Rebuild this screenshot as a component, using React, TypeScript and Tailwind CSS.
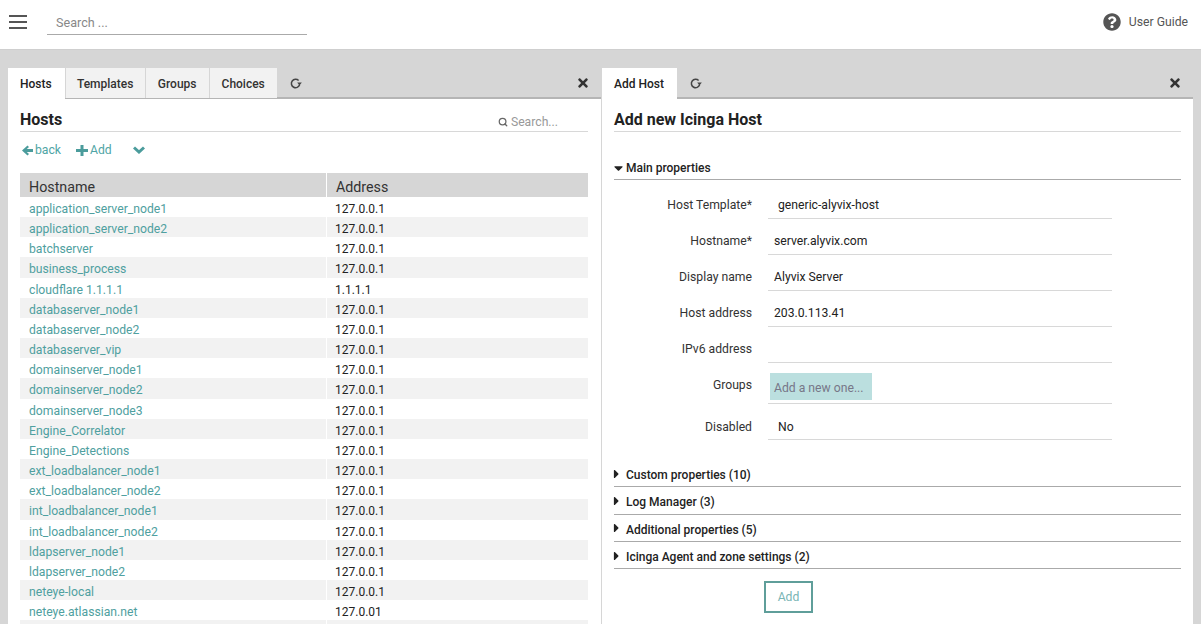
import { Search } from "lucide-react";
import { FaQuestionCircle, FaTimes, FaCaretDown, FaCaretRight } from "react-icons/fa";

const hosts: [string, string][] = [
  ["application_server_node1", "127.0.0.1"],
  ["application_server_node2", "127.0.0.1"],
  ["batchserver", "127.0.0.1"],
  ["business_process", "127.0.0.1"],
  ["cloudflare 1.1.1.1", "1.1.1.1"],
  ["databaserver_node1", "127.0.0.1"],
  ["databaserver_node2", "127.0.0.1"],
  ["databaserver_vip", "127.0.0.1"],
  ["domainserver_node1", "127.0.0.1"],
  ["domainserver_node2", "127.0.0.1"],
  ["domainserver_node3", "127.0.0.1"],
  ["Engine_Correlator", "127.0.0.1"],
  ["Engine_Detections", "127.0.0.1"],
  ["ext_loadbalancer_node1", "127.0.0.1"],
  ["ext_loadbalancer_node2", "127.0.0.1"],
  ["int_loadbalancer_node1", "127.0.0.1"],
  ["int_loadbalancer_node2", "127.0.0.1"],
  ["ldapserver_node1", "127.0.0.1"],
  ["ldapserver_node2", "127.0.0.1"],
  ["neteye-local", "127.0.0.1"],
  ["neteye.atlassian.net", "127.0.01"],
  ["", ""],
];

const fields = [
  { label: "Host Template*", value: "generic-alyvix-host", pad: "pl-[10px]" },
  { label: "Hostname*", value: "server.alyvix.com", pad: "pl-[6px]" },
  { label: "Display name", value: "Alyvix Server", pad: "pl-[6px]" },
  { label: "Host address", value: "203.0.113.41", pad: "pl-[6px]" },
  { label: "IPv6 address", value: "", pad: "pl-[6px]" },
];

const sections = ["Custom properties (10)", "Log Manager (3)", "Additional properties (5)", "Icinga Agent and zone settings (2)"];

function Tab({ label, active, width }: { label: string; active?: boolean; width?: string }) {
  return (
    <div
      className={
        active
          ? "h-[31px] pt-[1px] pl-[12px] pr-[13px] flex items-center bg-white text-[12px] font-medium text-[#222]"
          : `h-[30px] pt-[2px] ${width} justify-center flex items-center bg-[#f2f2f2] border-l border-[#d6d6d6] text-[12px] font-medium text-[#333]`
      }
    >
      {label}
    </div>
  );
}

function FieldRow({ label, children, h = "h-[36px]", pt = "pt-[13px]" }: { label: string; children: React.ReactNode; h?: string; pt?: string }) {
  return (
    <div className={`flex ${h}`}>
      <div className={`w-[138px] ${pt} text-right text-[12.2px] leading-[18px] text-[#333]`}>{label}</div>
      <div className="ml-[16px] w-[344px] border-b border-[#d8d8d8]">{children}</div>
    </div>
  );
}

function ReloadIcon() {
  return (
    <svg className="relative mt-[10px] ml-[13px]" width="12" height="11" viewBox="0 0 12 11" fill="none">
      <path d="M9.6 6.8A4.2 4.2 0 1 1 8.6 2.6" stroke="#444" strokeWidth="1.5" />
      <polygon points="7.2,4.6 11.8,4.6 9.5,7.4" fill="#444" />
    </svg>
  );
}

export default function App() {
  return (
    <div className="h-[624px] w-[1201px] overflow-hidden bg-[#d6d6d6] font-['Roboto',sans-serif]">
      <header className="h-[50px] bg-white flex items-start border-b border-[#cfcfcf]">
        <svg className="ml-[9px] mt-[15px]" width="18" height="14" viewBox="0 0 18 14" fill="#555">
          <rect x="0" y="0" width="18" height="2" />
          <rect x="0" y="6" width="18" height="2" />
          <rect x="0" y="12" width="18" height="2" />
        </svg>
        <div className="ml-[20px] w-[260px] h-[26px] mt-[9px] border-b border-[#aaa] pl-[9px] text-[12.6px] leading-[28px] text-[#888]">Search ...</div>
        <div className="ml-auto mr-[13px] mt-[13px] flex items-center gap-[8px] text-[12.2px] text-[#555]">
          <FaQuestionCircle className="w-[18px] h-[18px] text-[#555]" />
          <span>User Guide</span>
        </div>
      </header>

      <div className="flex pt-[18px] pl-[8px]">
        {/* Hosts pane */}
        <section className="w-[593px] h-[556px] overflow-hidden">
          <div className="flex items-start h-[31px] relative">
            <div className="absolute left-0 right-0 top-[29px] h-[2px] bg-[#b5b5b5]" />
            <div className="relative flex items-start">
              <Tab label="Hosts" active />
              <Tab label="Templates" width="w-[80px]" />
              <Tab label="Groups" width="w-[64px]" />
              <Tab label="Choices" width="w-[68px]" />
            </div>
            <ReloadIcon />
            <FaTimes className="relative ml-auto mr-[11px] mt-[8px] w-[14px] h-[14px] text-[#333]" />
          </div>
          <div className="h-[525px] bg-white pl-[12px] pr-[13px] overflow-hidden">
            <div className="h-[33px] flex items-end border-b border-[#d8d8d8]">
              <h1 className="text-[16px] leading-[22px] font-bold text-[#222]">Hosts</h1>
              <div className="ml-auto mr-[30px] flex items-center gap-[3px] text-[12.2px] text-[#999]">
                <Search className="w-[10px] h-[10px] text-[#666]" strokeWidth={3} />
                <span>Search...</span>
              </div>
            </div>
            <div className="h-[41px] pt-[9px] flex items-start text-[12.2px] leading-[18px] text-[#4fa5a5]">
              <svg className="ml-[2px] mt-[4px]" width="11" height="11" viewBox="0 0 11 11" fill="#4b9c9c">
                <path d="M5.5 0.5 7 2 4.8 4H11V7H4.8L7 9 5.5 10.5 0 5.5Z" />
              </svg>
              <span className="ml-[2px]">back</span>
              <svg className="ml-[15px] mt-[4px]" width="12" height="11" viewBox="0 0 12 11" fill="#4b9c9c">
                <rect x="4.5" y="0" width="3" height="11" />
                <rect x="0" y="4" width="12" height="3" />
              </svg>
              <span className="ml-[2px]">Add</span>
              <svg className="ml-[21px] mt-[5px]" width="12" height="8" viewBox="0 0 12 8" fill="none" stroke="#4b9c9c" strokeWidth="3">
                <path d="M1 1.5 6 6 11 1.5" />
              </svg>
            </div>
            <div className="flex h-[24px] bg-[#d6d6d6] text-[14.25px] leading-[28px] text-[#333]">
              <div className="w-[307px] pl-[9px] border-r border-white">Hostname</div>
              <div className="pl-[9px]">Address</div>
            </div>
            {hosts.map(([name, addr], i) => (
              <div key={i} className="flex h-[20.17px] text-[12.2px] leading-[25px]">
                <div className={`w-[306px] pl-[9px] mr-[1px] text-[#4fa0a0] ${i % 2 ? "bg-[#f2f2f2]" : "bg-white"}`}>{name}</div>
                <div className={`flex-1 pl-[8px] text-[12px] leading-[25px] text-[#222] ${i % 2 ? "bg-[#f2f2f2]" : "bg-white"}`}>{addr}</div>
              </div>
            ))}
          </div>
        </section>

        {/* Add host pane */}
        <section className="ml-[1px] w-[591px] h-[556px] overflow-hidden">
          <div className="flex items-start h-[31px] relative">
            <div className="absolute left-0 right-0 top-[29px] h-[2px] bg-[#b5b5b5]" />
            <div className="relative"><Tab label="Add Host" active /></div>
            <ReloadIcon />
            <FaTimes className="relative ml-auto mr-[11px] mt-[8px] w-[14px] h-[14px] text-[#333]" />
          </div>
          <div className="h-[525px] bg-white pl-[12px] pr-[12px]">
            <div className="h-[33px] flex items-end border-b border-[#d8d8d8]">
              <h1 className="text-[16px] leading-[22px] font-bold text-[#222]">Add new Icinga Host</h1>
            </div>
            <div className="mt-[24px] h-[24px] pt-[1px] flex items-center border-b border-[#aaa] text-[12px] font-medium text-[#222]">
              <FaCaretDown className="w-[9px] h-[14px] mr-[3px]" />
              Main properties
            </div>
            <div className="mt-[3px]">
              {fields.map((f) => (
                <FieldRow key={f.label} label={f.label}>
                  <div className={`${f.pad} pt-[13px] text-[12.2px] leading-[18px] text-[#222]`}>{f.value}</div>
                </FieldRow>
              ))}
              <FieldRow label="Groups" h="h-[41px]">
                <div className="pl-[2px] pt-[10px]">
                  <div className="w-[102px] h-[27px] pl-[4px] bg-[#bbdfdf] text-[12.2px] leading-[30px] text-[#778]">Add a new one...</div>
                </div>
              </FieldRow>
              <FieldRow label="Disabled" pt="pt-[14px]">
                <div className="pl-[10px] pt-[14px] text-[12.2px] leading-[18px] text-[#222]">No</div>
              </FieldRow>
            </div>
            <div className="mt-[20px]">
              {sections.map((s) => (
                <div key={s} className="h-[27.33px] pt-[4px] flex items-center border-b border-[#aaa] text-[12px] font-medium text-[#222]">
                  <FaCaretRight className="w-[9px] h-[14px] -ml-[2px] mr-[5px] -mt-[3px]" />
                  {s}
                </div>
              ))}
            </div>
            <div className="ml-[150px] mt-[12px] w-[49px] h-[32px] border-2 border-[#5f9e9a] flex items-center justify-center text-[12.2px] text-[#7ab5b5]">Add</div>
          </div>
        </section>
      </div>
    </div>
  );
}
